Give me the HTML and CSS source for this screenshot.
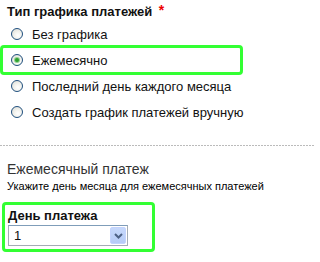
FILE: index.html
```html
<!DOCTYPE html>
<html lang="ru">
<head>
<meta charset="utf-8">
<link rel="stylesheet" href="styles.css">
</head>
<body>
<div class="page">
  <div class="group">
    <div class="group-title">Тип графика платежей <span class="req">*</span></div>
    <div class="options">
      <label class="option"><span class="radio"></span><span class="opt-text">Без графика</span></label>
      <label class="option option-hl"><span class="radio radio-on"></span><span class="opt-text">Ежемесячно</span></label>
      <label class="option"><span class="radio"></span><span class="opt-text">Последний день каждого месяца</span></label>
      <label class="option"><span class="radio"></span><span class="opt-text">Создать график платежей вручную</span></label>
    </div>
  </div>
  <div class="sep"></div>
  <div class="group2">
    <div class="sub-title">Ежемесячный платеж</div>
    <div class="hint">Укажите день месяца для ежемесячных платежей</div>
    <div class="field-box">
      <div class="field-label">День платежа</div>
      <div class="select"><span class="select-val">1</span><span class="select-btn"><svg width="9" height="6" viewBox="0 0 9 6"><path d="M1 1 L4.5 4.5 L8 1" fill="none" stroke="#4d6185" stroke-width="2"/></svg></span></div>
    </div>
  </div>
</div>
</body>
</html>
```
FILE: styles.css
```css
html, body { margin: 0; padding: 0; background: #fff; }
body { font-family: "Liberation Sans", Arial, sans-serif; color: #000; width: 315px; height: 262px; overflow: hidden; }
.page { padding-top: 3px; }
.group-title { font-weight: bold; font-size: 13px; padding-left: 7px; height: 18px; line-height: 18px; color: #111; }
.req { color: #e00; font-size: 14px; vertical-align: top; line-height: 14px; margin-left: 3px; }
.options { padding-top: 0; }
.option { display: flex; align-items: center; height: 26px; box-sizing: border-box; width: 243px; border: 3px solid transparent; border-radius: 4px; padding-left: 8px; font-size: 13px; color: #111; white-space: nowrap; }
.option-hl { border-color: #33ff33; height: 30px; margin: -2px 0; }
.radio { width: 12px; height: 12px; box-sizing: border-box; border: 1px solid #1f4f7e; border-radius: 50%; background: radial-gradient(circle at 60% 65%, #ffffff 0, #f3f3ee 40%, #d8d8d2 100%); margin-right: 9px; flex: none; display: flex; align-items: center; justify-content: center; }
.radio-on::after { content: ""; width: 4px; height: 4px; border-radius: 50%; background: #2ea12e; box-shadow: 0 0 0 1px #8fd08f; }
.sep { margin-top: 20px; height: 1px; background: repeating-linear-gradient(to right, #bbb 0 2px, transparent 2px 3px); }
.group2 { padding-top: 14px; }
.sub-title { font-size: 14px; color: #333; padding-left: 7px; height: 18px; line-height: 18px; }
.hint { font-size: 11px; padding-left: 7px; margin-top: 1px; line-height: 14px; color: #000; }
.field-box { margin: 9px 0 0 2px; width: 153px; height: 50px; box-sizing: border-box; border: 3px solid #33ff33; border-radius: 4px; padding: 3px 0 0 3px; }
.field-label { font-weight: bold; font-size: 13px; line-height: 16px; height: 17px; color: #111; }
.select { width: 120px; height: 21px; box-sizing: border-box; border: 1px solid #a5acb5; border-top-color: #7f9db9; display: flex; align-items: center; justify-content: space-between; padding: 1px; background: #fff; }
.select-val { font-size: 13px; padding-left: 4px; color: #111; }
.select-btn { width: 16px; height: 17px; box-sizing: border-box; background: linear-gradient(#c6d8fb, #b6cbf6); border: 1px solid #c3d3fd; border-radius: 2px; display: flex; align-items: center; justify-content: center; }
```
